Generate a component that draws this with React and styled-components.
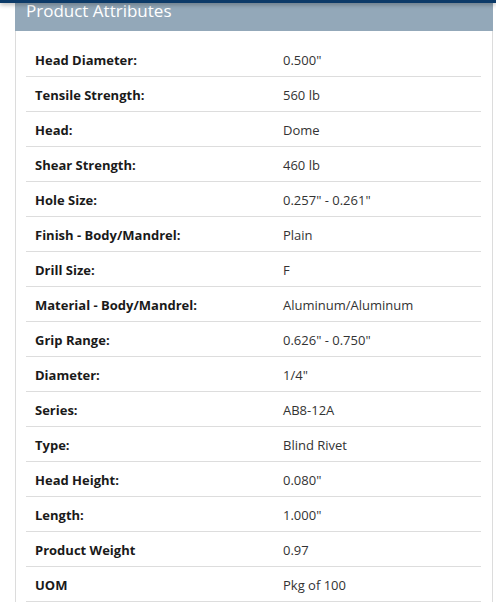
import styled, { createGlobalStyle } from "styled-components";

const attributes = [
  ["Head Diameter:", "0.500\""],
  ["Tensile Strength:", "560 lb"],
  ["Head:", "Dome"],
  ["Shear Strength:", "460 lb"],
  ["Hole Size:", "0.257\" - 0.261\""],
  ["Finish - Body/Mandrel:", "Plain"],
  ["Drill Size:", "F"],
  ["Material - Body/Mandrel:", "Aluminum/Aluminum"],
  ["Grip Range:", "0.626\" - 0.750\""],
  ["Diameter:", "1/4\""],
  ["Series:", "AB8-12A"],
  ["Type:", "Blind Rivet"],
  ["Head Height:", "0.080\""],
  ["Length:", "1.000\""],
  ["Product Weight", "0.97"],
  ["UOM", "Pkg of 100"],
];

function App() {
  return (
    <>
      <GlobalStyle />
      <TopBar />
      <Panel>
        <PanelHeader>
          <PanelTitle>Product Attributes</PanelTitle>
        </PanelHeader>
        <PanelBody>
          <AttrTable>
            {attributes.map(([label, value]) => (
              <AttrRow key={label}>
                <AttrLabel>{label}</AttrLabel>
                <AttrValue>{value}</AttrValue>
              </AttrRow>
            ))}
          </AttrTable>
        </PanelBody>
      </Panel>
    </>
  );
}

const GlobalStyle = createGlobalStyle`
  body {
    margin: 0;
    background: #fff;
    font-family: "Open Sans", "Liberation Sans", sans-serif;
  }
`;

const TopBar = styled.div`
  position: relative;
  z-index: 2;
  height: 3px;
  background: #0c3a68;
  box-shadow: 0 1px 5px rgba(0, 0, 0, 0.45);
`;

const Panel = styled.section`
  margin-left: 15px;
  width: 478px;
`;

const PanelHeader = styled.div`
  height: 28px;
  overflow: hidden;
  background: #93a8b9;
  padding-left: 11px;
`;

const PanelTitle = styled.h2`
  margin: -2px 0 0;
  font-size: 17px;
  line-height: 20px;
  font-weight: 400;
  color: #fff;
`;

const PanelBody = styled.div`
  border-left: 1px solid #dcdcdc;
  border-right: 1px solid #dcdcdc;
  padding: 11px 11px 0 10px;
  background: #fff;
`;

const AttrTable = styled.div`
  display: flex;
  flex-direction: column;
`;

const AttrRow = styled.div`
  display: grid;
  grid-template-columns: 257px 1fr;
  align-items: center;
  box-sizing: content-box;
  height: 33px;
  padding-top: 1px;
  border-bottom: 1px solid #dddddd;
  font-size: 13px;
`;

const AttrLabel = styled.div`
  padding-left: 9px;
  font-weight: 700;
  color: #1a1a1a;
`;

const AttrValue = styled.div`
  color: #333;
`;

export default App;
